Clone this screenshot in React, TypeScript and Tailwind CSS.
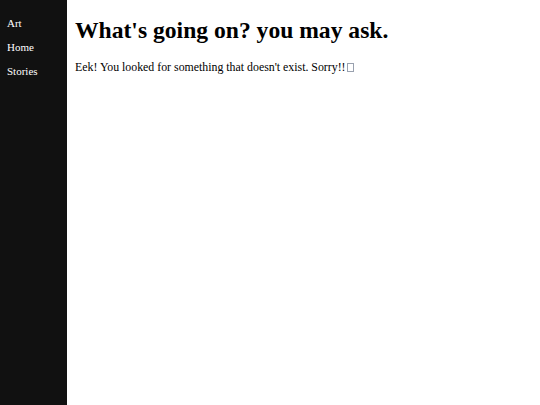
export default function App() {
	const links = ["Art", "Home", "Stories"];

	return (
		<div className="flex min-h-[405px] font-['Liberation_Serif',serif] text-black">
			{/* Sidebar */}
			<nav className="w-[67px] shrink-0 bg-[#111111] pt-[11px] pl-[7px]">
				{links.map((link) => (
					<a key={link} href="#" className="block text-[11px] leading-[24px] text-white">
						{link}
					</a>
				))}
			</nav>

			{/* Content */}
			<main className="flex-1 bg-white pl-[8px] pt-[14px]">
				<h1 className="text-[23.6px] font-bold leading-[32px]">
					What's going on? you may ask.
				</h1>
				<p className="mt-[13px] text-[11.85px] leading-[16px]">
					Eek! You looked for something that doesn't exist. Sorry!!
					<span className="ml-[1px] inline-block h-[9px] w-[7px] border border-gray-400 align-[-1px]"></span>
				</p>
			</main>
		</div>
	);
}
